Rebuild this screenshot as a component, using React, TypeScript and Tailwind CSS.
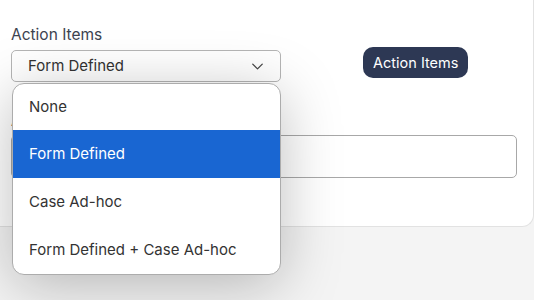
import React from 'react';
import { ChevronDown } from 'lucide-react';

const options = ['None', 'Form Defined', 'Case Ad-hoc', 'Form Defined + Case Ad-hoc'];

export default function App() {
  const selected = 'Form Defined';

  return (
    <div className="w-[534px] h-[300px] bg-[#f4f4f4] overflow-hidden" style={{ fontFamily: 'Inter, "Noto Sans", sans-serif' }}>
      {/* Form card */}
      <div className="relative w-[534px] h-[227px] bg-white border-r border-b border-[#e2e2e2] rounded-br-[12px] pl-[11px] pr-[17px] pt-[24px]">
        <div className="flex flex-col gap-[5px]">
          <label className="text-[15.5px] leading-[21px] text-[#3d4350]">Action Items</label>
          <button className="w-[270px] h-[32px] flex items-center justify-between pl-[16px] pr-[13px] border border-[#b5b5b5] rounded-[5px] bg-white text-[15px] text-[#333]">
            <span>{selected}</span>
            <ChevronDown className="w-[19px] h-[19px] text-[#444]" strokeWidth={1.6} />
          </button>
        </div>

        <div className="flex flex-col gap-[4px] mt-[28px]">
          <label className="text-[15.5px] leading-[21px] text-[#3d4350]">Assignee</label>
          <div className="w-[506px] h-[43px] border border-[#a8a8a8] rounded-[5px] bg-white" />
        </div>

        {/* Tooltip */}
        <div className="absolute left-[363px] top-[47px] h-[31px] px-[10px] flex items-center rounded-[10px] bg-[#2d3854] text-white text-[14.5px]">
          Action Items
        </div>

        {/* Dropdown menu */}
        <ul className="absolute left-[12px] top-[83px] w-[269px] bg-white border border-[#acacac] rounded-[12px] overflow-hidden shadow-[0_10px_60px_rgba(0,0,0,0.26)]">
          {options.map((opt, i) => (
            <li
              key={opt}
              className={`flex items-center pl-[16px] text-[15px] ${
                opt === selected ? 'bg-[#1966d2] text-white' : 'text-[#333]'
              }`}
              style={{ height: i === 0 ? 46 : 48 }}
            >
              {opt}
            </li>
          ))}
        </ul>
      </div>
    </div>
  );
}
